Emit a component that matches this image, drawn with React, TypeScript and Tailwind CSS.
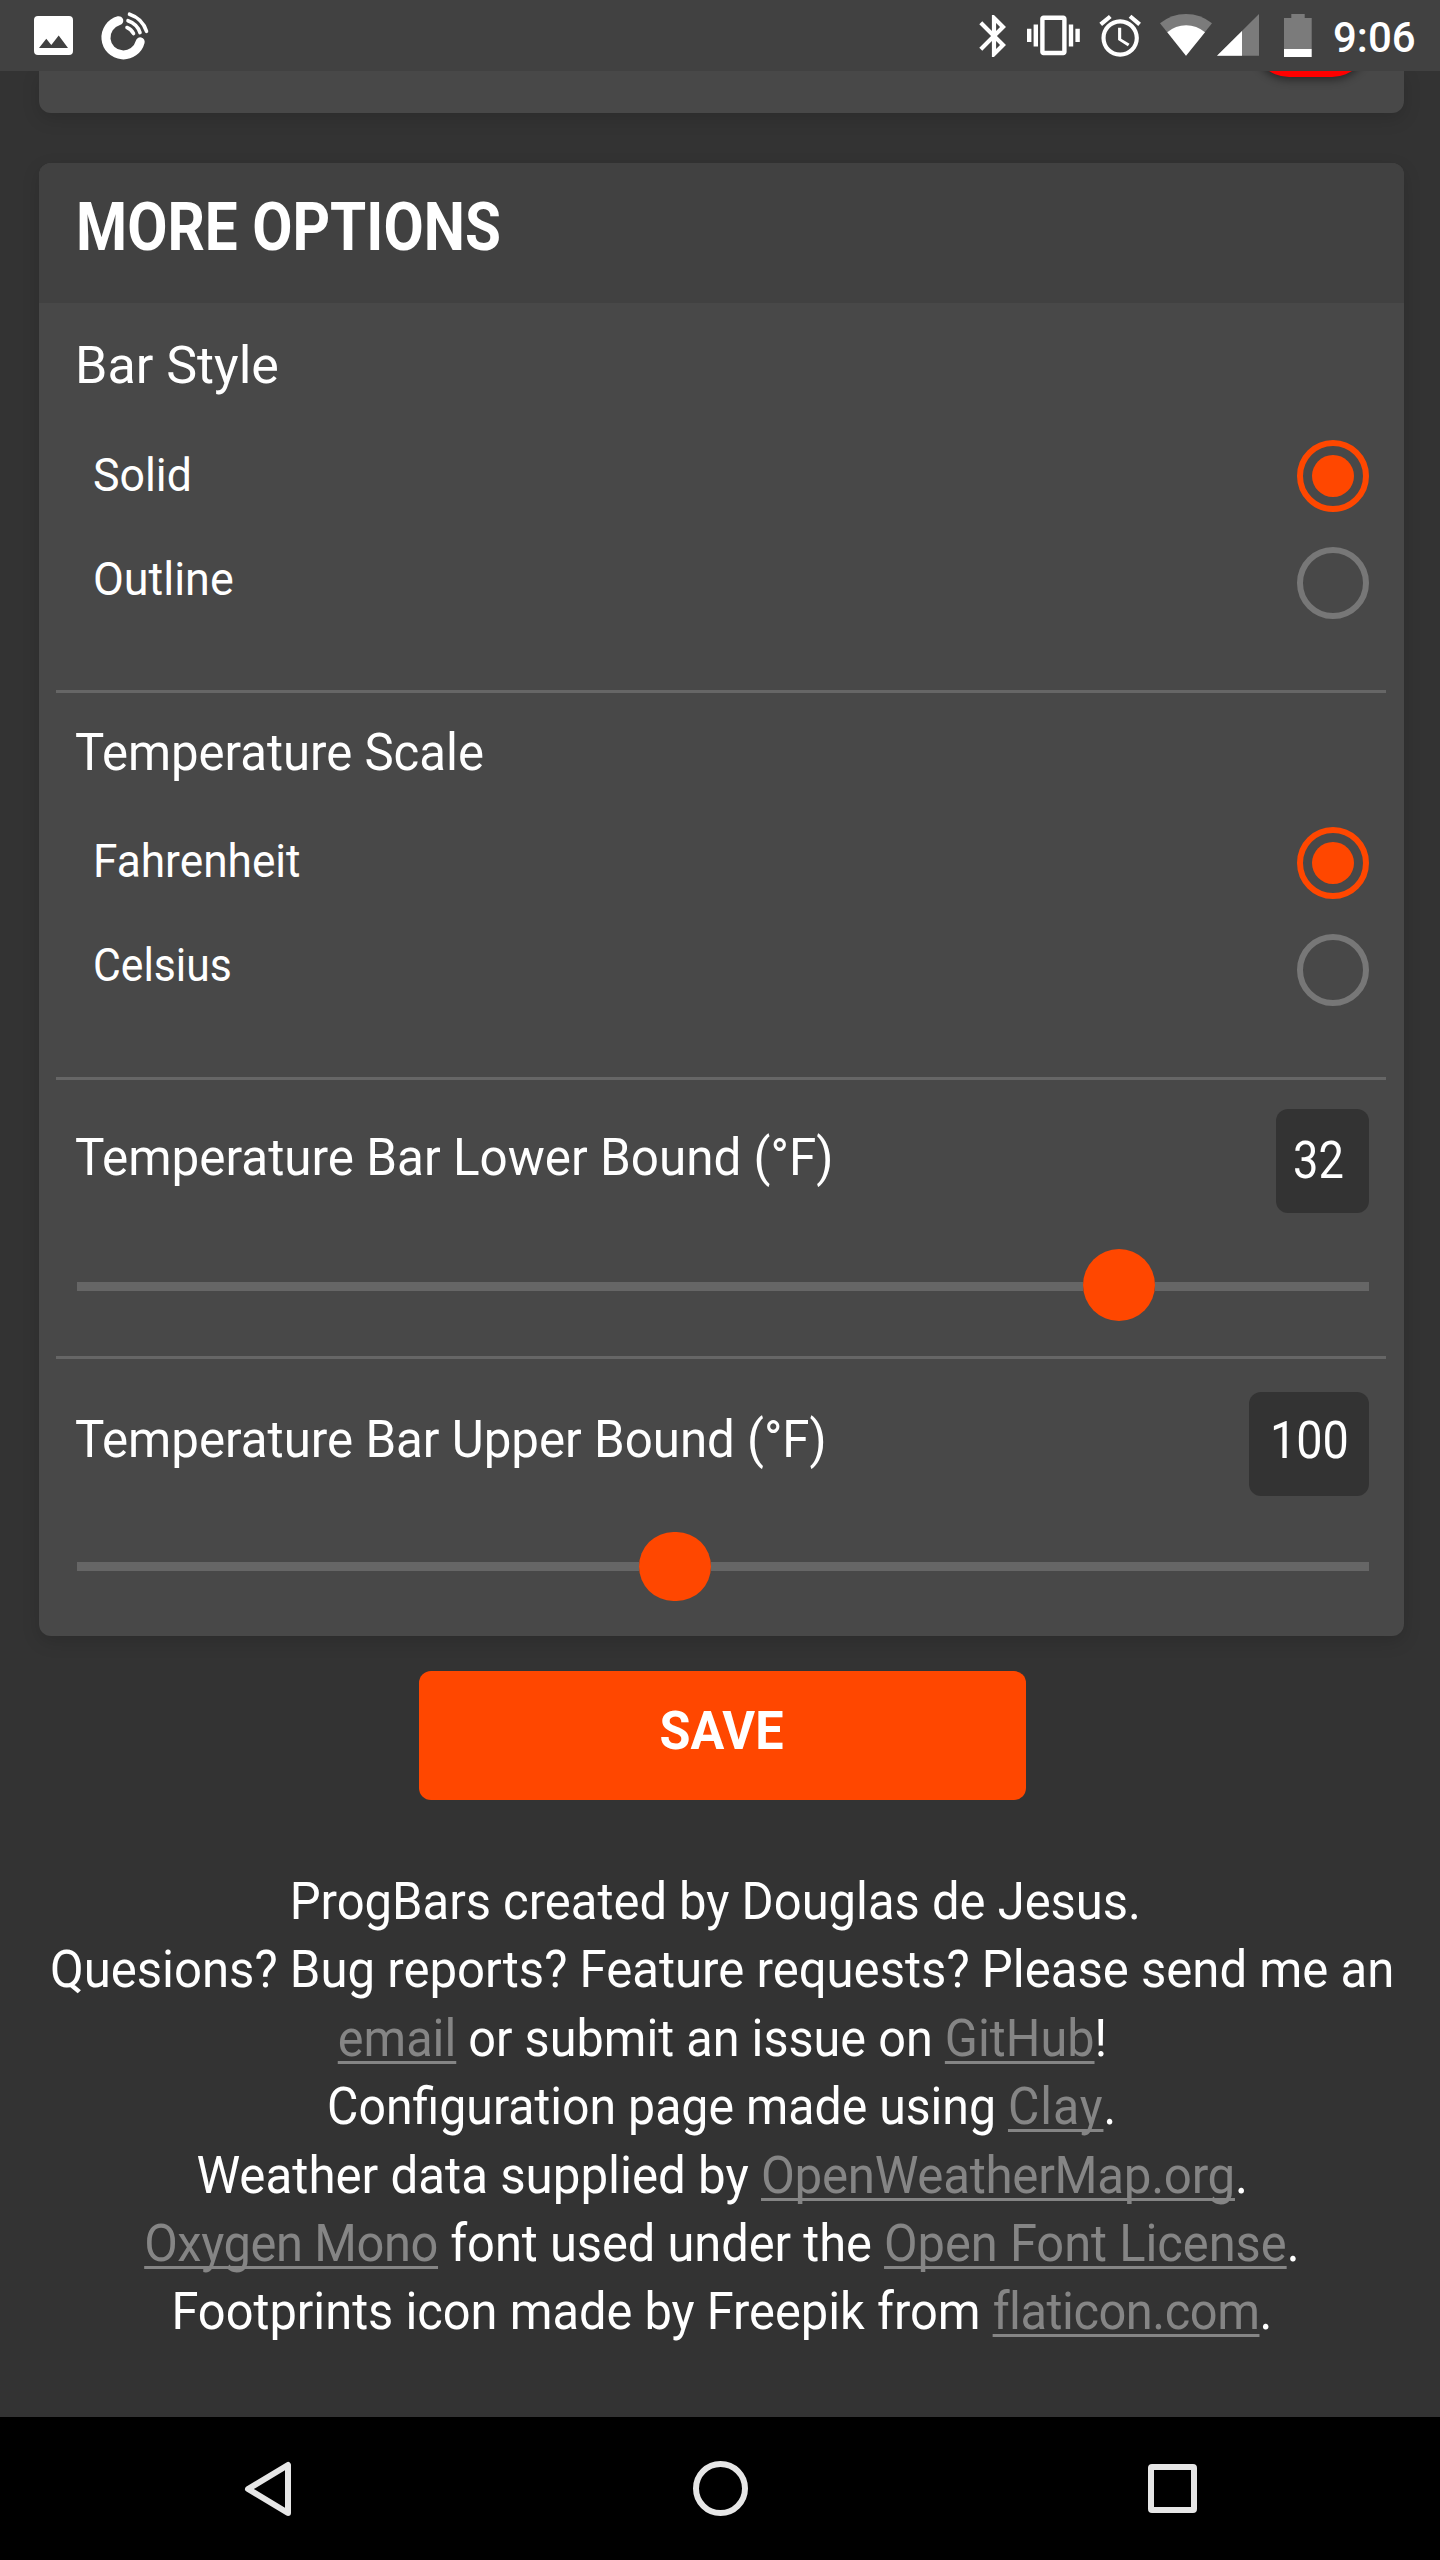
import type { ReactNode } from 'react';

function StatusBar() {
  return (
    <header className="relative z-10 h-[71px] shrink-0 bg-[#414141]">
      <svg className="block h-[71px] w-[1440px]" viewBox="0 0 1440 71" fill="#fff">
        {/* photo */}
        <path fillRule="evenodd" d="M38 16h31a4 4 0 0 1 4 4v31a4 4 0 0 1-4 4H38a4 4 0 0 1-4-4V20a4 4 0 0 1 4-4zM39 48h29L58.7 35.5l-7.4 9.5-5-6.3z" />
        {/* podcast ring */}
        <g fill="none" stroke="#fff" strokeLinecap="round">
          <path strokeWidth="9" d="M118.8 20.7A17.4 17.4 0 1 0 140.2 41.8" />
          <path strokeWidth="3.6" d="M127 27.5Q131.5 29.2 133.5 33.6" />
          <path strokeWidth="3.6" d="M128 20.7Q137.3 24 140 32.6" />
          <path strokeWidth="3.6" d="M129.5 14.2Q142.5 18.5 146.5 31.3" />
        </g>
        {/* bluetooth */}
        <path
          transform="translate(968.8 10.8) scale(2.1)"
          d="M17.71 7.71L12 2h-1v7.59L6.41 5 5 6.41 10.59 12 5 17.59 6.41 19 11 14.41V22h1l5.71-5.71-4.3-4.29 4.3-4.29zM13 5.83l1.88 1.88L13 9.59V5.83zm1.88 10.46L13 18.17v-3.76l1.88 1.88z"
        />
        {/* vibrate */}
        <path
          transform="translate(1027 9) scale(2.2)"
          d="M0 15h2V9H0v6zm3 2h2V7H3v10zm19-8v6h2V9h-2zm-3 8h2V7h-2v10zM16.5 3h-9C6.67 3 6 3.67 6 4.5v15c0 .83.67 1.5 1.5 1.5h9c.83 0 1.5-.67 1.5-1.5v-15c0-.83-.67-1.5-1.5-1.5zM16 19H8V5h8v14z"
        />
        {/* alarm */}
        <path
          transform="translate(1095.2 11) scale(2.08)"
          d="M22 5.7l-4.6-3.9-1.3 1.5 4.6 3.9L22 5.7zM7.9 3.4L6.6 1.9 2 5.7l1.3 1.5 4.6-3.8zM12.5 8H11v6l4.7 2.9.8-1.2-4-2.4V8zM12 4c-5 0-9 4-9 9s4 9 9 9 9-4 9-9-4-9-9-9zm0 16c-3.9 0-7-3.1-7-7s3.1-7 7-7 7 3.1 7 7-3.1 7-7 7z"
        />
        {/* wifi */}
        <path fill="#7b7b7b" d="M1160 23.3Q1171.5 14 1186 14T1212 23.3L1186 55.7z" />
        <path d="M1167.3 32.3Q1175.5 25.3 1186.1 25.3T1205 32.3L1186 55.7z" />
        {/* signal */}
        <path fill="#7b7b7b" d="M1259 14v41.7h-42z" />
        <path d="M1242 31v24.7h-25z" />
        {/* battery */}
        <path fill="#7b7b7b" d="M1284 18h7.3v-4h13.4v4h7v31H1284z" />
        <path d="M1284 49h27.7v8H1284z" />
      </svg>
      <span className="absolute top-0 left-[1333px] origin-left scale-x-[0.976] text-[43px] leading-[75px] font-medium">
        9:06
      </span>
    </header>
  );
}

function Option({ label, checked, labelClass }: { label: string; checked?: boolean; labelClass: string }) {
  return (
    <div className="flex h-[72px] items-center justify-between">
      <span className={`ml-[18px] origin-left text-[46.5px] leading-[60px] ${labelClass}`}>{label}</span>
      {checked ? (
        <span className="flex size-[72px] items-center justify-center rounded-full border-[6px] border-[#ff4700]">
          <span className="size-[42px] rounded-full bg-[#ff4700]" />
        </span>
      ) : (
        <span className="size-[72px] rounded-full border-[6px] border-[#777777]" />
      )}
    </div>
  );
}

function Title({ children, className }: { children: ReactNode; className: string }) {
  return <h2 className={`w-max origin-left text-[52px] leading-[60px] ${className}`}>{children}</h2>;
}

function Divider() {
  return <div className="mr-[18px] ml-[17px] h-[3px] bg-[#666666]" />;
}

function Slider({ before, thumbClass, trackClass }: { before: string; thumbClass: string; trackClass: string }) {
  return (
    <div className="ml-[2px] flex h-[72px] items-center">
      <span className={`bg-[#666666] ${trackClass} ${before}`} />
      <span className={`w-[72px] shrink-0 rounded-[36px] bg-[#ff4700] ${thumbClass}`} />
      <span className={`grow bg-[#666666] ${trackClass}`} />
    </div>
  );
}

function Link({ children, className = '' }: { children: ReactNode; className?: string }) {
  return (
    <a
      className={`text-[#858585] underline decoration-[3px] underline-offset-[5px] [text-decoration-skip-ink:none] ${className}`}
    >
      {children}
    </a>
  );
}

export default function App() {
  return (
    <div className="flex h-[2560px] w-[1440px] flex-col overflow-hidden bg-[#333333] font-['Roboto',sans-serif] text-white">
      <StatusBar />

      <section className="ml-[39px] flex h-[42px] w-[1365px] shrink-0 justify-end rounded-b-[12px] bg-[#484848] pr-[36px] shadow-[0_6px_18px_rgba(0,0,0,0.14)]">
        <span className="-mt-[66px] h-[72px] w-[115px] rounded-full bg-[#ff0000] shadow-[0_3px_9px_rgba(0,0,0,0.45)]" />
      </section>

      <section className="mt-[50px] ml-[39px] h-[1473px] w-[1365px] shrink-0 overflow-hidden rounded-[12px] bg-[#484848] shadow-[0_6px_18px_rgba(0,0,0,0.14)]">
        <div className="h-[140px] bg-[#414141] pt-[25px] pl-[37px]">
          <h1 className="w-max origin-left scale-x-[0.885] text-[66px] leading-[80px] font-bold">MORE OPTIONS</h1>
        </div>

        <div className="h-[387px] pt-[33px] pr-[35px] pl-[36px]">
          <Title className="">Bar Style</Title>
          <div className="mt-[44px] flex flex-col gap-[35px]">
            <Option label="Solid" checked labelClass="scale-x-[0.96] pb-[2px]" />
            <Option label="Outline" labelClass="scale-x-[0.965] pb-[8px]" />
          </div>
        </div>
        <Divider />

        <div className="h-[384px] pt-[30px] pr-[35px] pl-[36px]">
          <Title className="scale-x-[0.944]">Temperature Scale</Title>
          <div className="mt-[44px] flex flex-col gap-[35px]">
            <Option label="Fahrenheit" checked labelClass="scale-x-[0.951] pb-[4px]" />
            <Option label="Celsius" labelClass="scale-x-[0.918] pb-[10px]" />
          </div>
        </div>
        <Divider />

        <div className="h-[276px] pt-[29px] pr-[35px] pl-[36px]">
          <div className="flex h-[104px] items-center justify-between">
            <Title className="scale-x-[0.95] pb-[6px]">Temperature Bar Lower Bound (°F)</Title>
            <span className="h-[104px] w-[93px] rounded-[12px] bg-[#333333] pl-[17px]">
              <span className="block origin-left scale-x-[0.87] text-[52px] leading-[103px]">32</span>
            </span>
          </div>
          <div className="pt-[36px]">
            <Slider before="w-[1005.5px]" thumbClass="h-[72px]" trackClass="mt-[2px] h-[9px]" />
          </div>
        </div>
        <Divider />

        <div className="h-[277px] pt-[33px] pr-[35px] pl-[36px]">
          <div className="flex h-[104px] items-center justify-between">
            <Title className="scale-x-[0.947] pb-[8px]">Temperature Bar Upper Bound (°F)</Title>
            <span className="h-[104px] w-[120px] rounded-[12px] bg-[#333333] pl-[21px]">
              <span className="block origin-left scale-x-[0.9] text-[52px] leading-[97px]">100</span>
            </span>
          </div>
          <div className="pt-[34px]">
            <Slider before="w-[562px]" thumbClass="h-[69px]" trackClass="h-[9px]" />
          </div>
        </div>
      </section>

      <button className="mt-[35px] ml-[419px] h-[129px] w-[607px] shrink-0 rounded-[12px] bg-[#ff4700] pr-[2px] pb-[10px]">
        <span className="inline-block scale-x-[0.932] text-[54px] leading-[60px] font-bold">SAVE</span>
      </button>

      <footer className="mt-[68px] flex h-[549px] shrink-0 flex-col items-center pl-[4px] text-[52px] leading-[68.4px] whitespace-nowrap">
        <p className="-ml-[14px] scale-x-[0.941]">ProgBars created by Douglas de Jesus.</p>
        <p className="scale-x-[0.944]">Quesions? Bug reports? Feature requests? Please send me an</p>
        <p className="scale-x-[0.935]">
          <Link>email</Link> or submit an issue on <Link>GitHub</Link>!
        </p>
        <p className="scale-x-[0.927]">
          Configuration page made using <Link className="tracking-[1px]">Clay</Link>.
        </p>
        <p className="scale-x-[0.947]">
          Weather data supplied by <Link className="tracking-[-0.3px]">OpenWeatherMap.org</Link>.
        </p>
        <p className="scale-x-[0.938]">
          <Link className="tracking-[-0.4px]">Oxygen Mono</Link> font used under the <Link>Open Font License</Link>.
        </p>
        <p className="scale-x-[0.938]">
          Footprints icon made by Freepik from <Link className="tracking-[-0.5px]">flaticon.com</Link>.
        </p>
      </footer>

      <nav className="flex h-[143px] shrink-0 items-center bg-black pl-[244px]">
        <svg className="h-[56px] w-[48px]" viewBox="0 0 48 56" fill="none" stroke="#e6e6e6" strokeWidth="6" strokeLinejoin="round">
          <path d="M44 4v48L4 28z" />
        </svg>
        <span className="ml-[401px] size-[55px] rounded-full border-[6px] border-[#e6e6e6]" />
        <span className="ml-[400px] size-[49px] rounded-[4px] border-[6px] border-[#e6e6e6]" />
      </nav>
    </div>
  );
}
